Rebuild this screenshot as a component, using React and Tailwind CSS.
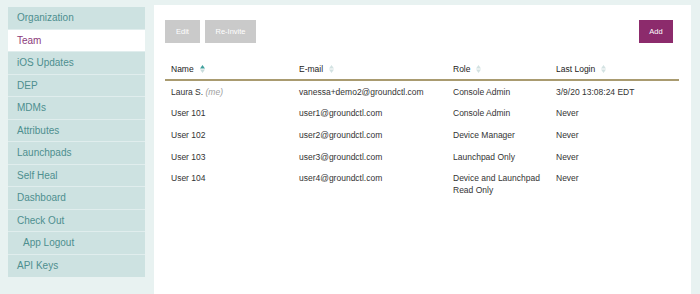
const navItems = [
  { label: 'Organization' },
  { label: 'Team', active: true },
  { label: 'iOS Updates' },
  { label: 'DEP' },
  { label: 'MDMs' },
  { label: 'Attributes' },
  { label: 'Launchpads' },
  { label: 'Self Heal' },
  { label: 'Dashboard' },
  { label: 'Check Out' },
  { label: 'App Logout', indent: true },
  { label: 'API Keys' },
];

const users = [
  { name: 'Laura S.', me: true, email: 'vanessa+demo2@groundctl.com', role: 'Console Admin', login: '3/9/20 13:08:24 EDT' },
  { name: 'User 101', email: 'user1@groundctl.com', role: 'Console Admin', login: 'Never' },
  { name: 'User 102', email: 'user2@groundctl.com', role: 'Device Manager', login: 'Never' },
  { name: 'User 103', email: 'user3@groundctl.com', role: 'Launchpad Only', login: 'Never' },
  { name: 'User 104', email: 'user4@groundctl.com', role: 'Device and Launchpad Read Only', login: 'Never' },
];

const SortIcon = ({ active }) => (
  <svg width="5" height="8" viewBox="0 0 5 8" className="ml-[6px] shrink-0">
    <polygon points="0,3.4 2.5,0 5,3.4" fill={active ? '#3f9f9c' : '#d3e2e2'} />
    <polygon points="0,4.6 5,4.6 2.5,8" fill={active ? '#c9dcdc' : '#d3e2e2'} />
  </svg>
);

const cols = 'grid grid-cols-[128px_154px_103px_129px]';

const App = () => {
  return (
    <div className="h-[294px] w-[700px] overflow-hidden bg-[#e8f2f1] flex items-start font-['Liberation_Sans',Arial,sans-serif]">
      {/* Sidebar */}
      <nav className="ml-[8px] mt-[7px] w-[137px] shrink-0">
        {navItems.map((item, i) => (
          <div
            key={i}
            className={`h-[22.5px] flex items-center text-[10px] ${i < navItems.length - 1 ? 'border-b border-[#e0eded]' : ''} ${item.indent ? 'pl-[15px]' : 'pl-[9px]'} ${item.active ? 'bg-white text-[#8c3a7b]' : 'bg-[#cde2e1] text-[#4e8f8f]'}`}
          >
            {item.label}
          </div>
        ))}
      </nav>

      {/* Main panel */}
      <main className="ml-[9px] mt-[5px] w-[537px] h-[400px] bg-white pl-[11px] pr-[12px] pt-[15px]">
        <div className="flex items-center pr-[6px]">
          <button className="h-[23px] w-[35px] bg-[#cacaca] text-white text-[7.5px]">Edit</button>
          <button className="ml-[5px] h-[23px] w-[51px] bg-[#cacaca] text-white text-[7.5px]">Re-Invite</button>
          <button className="ml-auto h-[23px] w-[34px] bg-[#8c2b6c] text-white text-[7.5px]">Add</button>
        </div>

        <div className="mt-[14px] text-[8.5px] leading-[12px] text-[#333]">
          <div className={`${cols} border-b-2 border-[#a99b70] text-[#222]`}>
            {[
              ['Name', true],
              ['E-mail', false],
              ['Role', false],
              ['Last Login', false],
            ].map(([h, active]) => (
              <div key={h} className="flex items-center pl-[6px] pt-[6px] pb-[4px]">
                <span>{h}</span>
                <SortIcon active={active} />
              </div>
            ))}
          </div>
          {users.map((u) => (
            <div key={u.name} className={cols}>
              <div className="pl-[6px] py-[4.8px]">
                {u.name}
                {u.me && <span className="italic text-[#a0a0a0]"> (me)</span>}
              </div>
              <div className="pl-[6px] py-[4.8px]">{u.email}</div>
              <div className="pl-[6px] pr-[6px] py-[4.8px]">{u.role}</div>
              <div className="pl-[6px] py-[4.8px]">{u.login}</div>
            </div>
          ))}
        </div>
      </main>
    </div>
  );
};

export default App;
